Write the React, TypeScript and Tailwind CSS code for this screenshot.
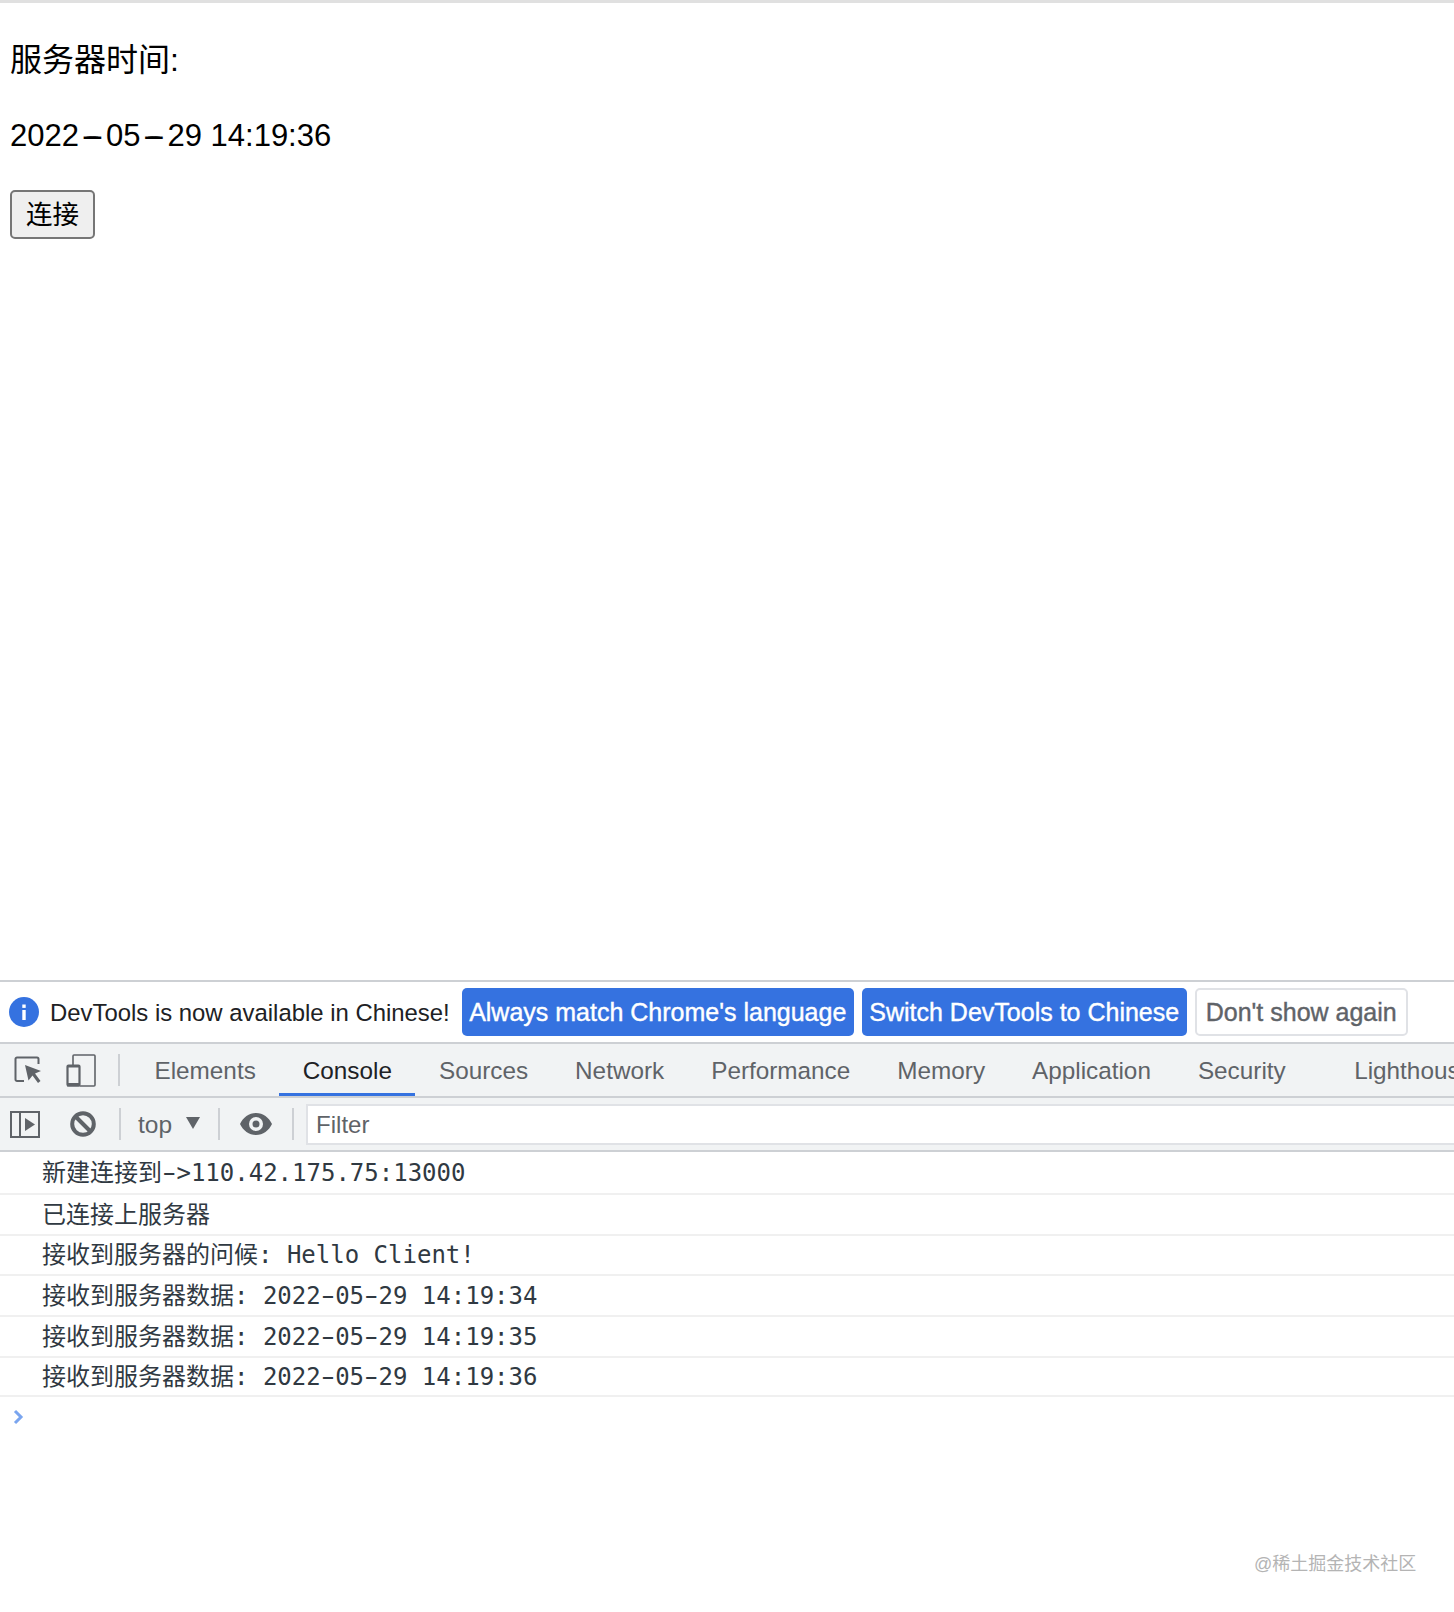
import React from 'react';

const sans = "font-['Liberation_Sans','Noto_Sans_CJK_SC',sans-serif]";
const mono = "font-['DejaVu_Sans_Mono','Noto_Sans_CJK_SC',monospace]";

const tabs = ['Elements', 'Console', 'Sources', 'Network', 'Performance', 'Memory', 'Application', 'Security'];

const logs = [
  { text: '新建连接到->110.42.175.75:13000', h: 'h-[43px]' },
  { text: '已连接上服务器', h: 'h-[41px]' },
  { text: '接收到服务器的问候: Hello Client!', h: 'h-[40px]' },
  { text: '接收到服务器数据: 2022-05-29 14:19:34', h: 'h-[41px]' },
  { text: '接收到服务器数据: 2022-05-29 14:19:35', h: 'h-[41px]' },
  { text: '接收到服务器数据: 2022-05-29 14:19:36', h: 'h-[39px]' },
];

// the screenshot's font draws a much longer hyphen than ours
const Dashed = ({ text, dash }: { text: string; dash: string }) => (
  <>
    {text.split('-').map((part, i) => (
      <React.Fragment key={i}>
        {i > 0 && <span className={dash}>-</span>}
        {part}
      </React.Fragment>
    ))}
  </>
);

const Sep = () => <div className="w-[2px] h-[32px] bg-[#cdd0d4] shrink-0" />;

const InfoIcon = () => (
  <svg width="30" height="30" viewBox="0 0 30 30" className="shrink-0">
    <circle cx="15" cy="15" r="15" fill="#3572e0" />
    <rect x="13.3" y="13" width="3.4" height="10" fill="#fff" />
    <rect x="13.3" y="7.5" width="3.4" height="3.4" fill="#fff" />
  </svg>
);

const InspectIcon = () => (
  <svg width="28" height="28" viewBox="0 0 28 28" fill="none" className="shrink-0">
    <path d="M10 25H3a1.5 1.5 0 0 1-1.5-1.5V3A1.5 1.5 0 0 1 3 1.5h20A1.5 1.5 0 0 1 24.500 3v5" stroke="#5f6368" strokeWidth="2" />
    <path d="M11 9l16 6-6 2.500 5.500 7.500-2.500 2-5.500-7.500-4 5z" fill="#5f6368" />
  </svg>
);

const DeviceIcon = () => (
  <svg width="30" height="33" viewBox="0 0 30 33" fill="none" className="shrink-0">
    <path d="M7 11V2a1 1 0 0 1 1-1h20a1 1 0 0 1 1 1v29a1 1 0 0 1-1 1H14" stroke="#5f6368" strokeWidth="1.600" />
    <rect x="1.500" y="11.500" width="12" height="20" rx="1" stroke="#5f6368" strokeWidth="2.200" />
    <rect x="1" y="29" width="13" height="3.500" fill="#5f6368" />
    <rect x="1" y="11" width="13" height="2.500" fill="#5f6368" />
  </svg>
);

const SidebarIcon = () => (
  <svg width="30" height="27" viewBox="0 0 30 27" fill="none" className="shrink-0">
    <rect x="1" y="1" width="28" height="25" stroke="#5f6368" strokeWidth="2" />
    <rect x="9" y="1" width="2" height="25" fill="#5f6368" />
    <path d="M15 7l10 6.500-10 6.500z" fill="#5f6368" />
  </svg>
);

const ClearIcon = () => (
  <svg width="26" height="26" viewBox="0 0 26 26" fill="none" className="shrink-0">
    <circle cx="13" cy="13" r="10.800" stroke="#5f6368" strokeWidth="4" />
    <path d="M5.500 5.500l15 15" stroke="#5f6368" strokeWidth="4" />
  </svg>
);

const EyeIcon = () => (
  <svg width="32" height="22" viewBox="0 0 32 22" className="shrink-0">
    <path fillRule="evenodd" fill="#5f6368" d="M16 0C9 0 3 4.500 0 11c3 6.500 9 11 16 11s13-4.500 16-11C29 4.500 23 0 16 0zm0 18a7 7 0 1 1 0-14 7 7 0 0 1 0 14zm0-3.500a3.500 3.500 0 1 0 0-7 3.500 3.500 0 0 0 0 7z" />
  </svg>
);

export default function App() {
  return (
    <div className={`relative w-[1454px] h-[1612px] overflow-hidden bg-white ${sans}`}>
      <div className="h-[980px] border-t-[3px] border-[#e0e0e0] pl-[10px] text-black">
        <p className="text-[32px] leading-[37px] pt-[39px]">服务器时间:</p>
        <p className="text-[31px] leading-[37px] mt-[38px]">
          <Dashed text="2022-05-29 14:19:36" dash="inline-block w-[27px] text-center [text-shadow:2px_0_currentColor,-2px_0_currentColor,5px_0_currentColor,-5px_0_currentColor]" />
        </p>
        <button className="mt-[36px] w-[85px] h-[49px] pt-[2px] rounded-[5px] border-2 border-[#767676] bg-[#efefef] text-[26.500px] leading-none">连接</button>
      </div>

      <div className="h-[64px] border-y-[2px] border-[#cdd0d4] flex items-center pl-[9px] text-[23.900px]">
        <InfoIcon />
        <span className="ml-[11px] pt-[2px] text-[#202124]">DevTools is now available in Chinese!</span>
        <button className="ml-[12px] h-[48px] w-[392px] pt-[2px] rounded-[5px] bg-[#3572e0] text-white text-[25px] whitespace-nowrap [-webkit-text-stroke:0.4px_white]">Always match Chrome's language</button>
        <button className="ml-[8px] h-[48px] w-[325px] pt-[2px] rounded-[5px] bg-[#3572e0] text-white text-[25px] whitespace-nowrap [-webkit-text-stroke:0.4px_white]">Switch DevTools to Chinese</button>
        <button className="ml-[8px] h-[48px] w-[213px] pt-[2px] rounded-[5px] border-2 border-[#e0e2e6] bg-white text-[#5f6368] text-[25px] whitespace-nowrap [-webkit-text-stroke:0.4px_#5f6368]">Don't show again</button>
      </div>

      <div className="h-[54px] bg-[#f1f3f4] border-b-[2px] border-[#cdd0d4] flex items-center pl-[14px] text-[24.300px] text-[#5f6368] whitespace-nowrap overflow-hidden">
        <InspectIcon />
        <div className="ml-[24px]"><DeviceIcon /></div>
        <div className="ml-[22px]"><Sep /></div>
        <div className="ml-[11px] flex h-full shrink-0">
          {tabs.map((t) => (
            <div
              key={t}
              className={`h-full px-[23.500px] flex items-center ${t === 'Console' ? 'text-[#202124] border-b-[3px] border-[#3572e0] pt-[5px]' : 'pt-[2px]'}`}
            >
              {t}
            </div>
          ))}
          <div className="h-full pl-[45px] pt-[2px] flex items-center">Lighthouse</div>
        </div>
      </div>

      <div className="h-[54px] bg-[#f1f3f4] border-b-[2px] border-[#cdd0d4] flex items-center pl-[10px] text-[24px] text-[#5f6368] whitespace-nowrap">
        <SidebarIcon />
        <div className="ml-[30px]"><ClearIcon /></div>
        <div className="ml-[23px]"><Sep /></div>
        <span className="ml-[17px] pt-[2px] text-[24.500px]">top</span>
        <div className="ml-[14px] mb-[2px] w-0 h-0 border-x-[7px] border-x-transparent border-t-[12px] border-t-[#5f6368]" />
        <div className="ml-[18px]"><Sep /></div>
        <div className="ml-[20px]"><EyeIcon /></div>
        <div className="ml-[20px]"><Sep /></div>
        <div className="ml-[12px] flex-1 h-[41px] bg-white border-2 border-r-0 border-[#e0e2e6] pl-[8px] pt-[2px] flex items-center">Filter</div>
      </div>

      <div className={`${mono} text-[24px] text-[#303942] whitespace-pre`}>
        {logs.map((l) => (
          <div key={l.text} className={`${l.h} pl-[42px] border-b-2 border-[#f0f0f0] flex items-center`}>
            <div><Dashed text={l.text} dash="[text-shadow:2px_0_currentColor,-2px_0_currentColor]" /></div>
          </div>
        ))}
        <div className="pl-[13px] pt-[12px]">
          <svg width="11" height="16" viewBox="0 0 11 16" fill="none">
            <path d="M2 2l6 6-6 6" stroke="#7aa5ef" strokeWidth="3" />
          </svg>
        </div>
      </div>

      <div className="absolute left-[1254px] top-[1554px] text-[18px] leading-[20px] text-[#b4b4b4] whitespace-nowrap">@稀土掘金技术社区</div>
    </div>
  );
}
